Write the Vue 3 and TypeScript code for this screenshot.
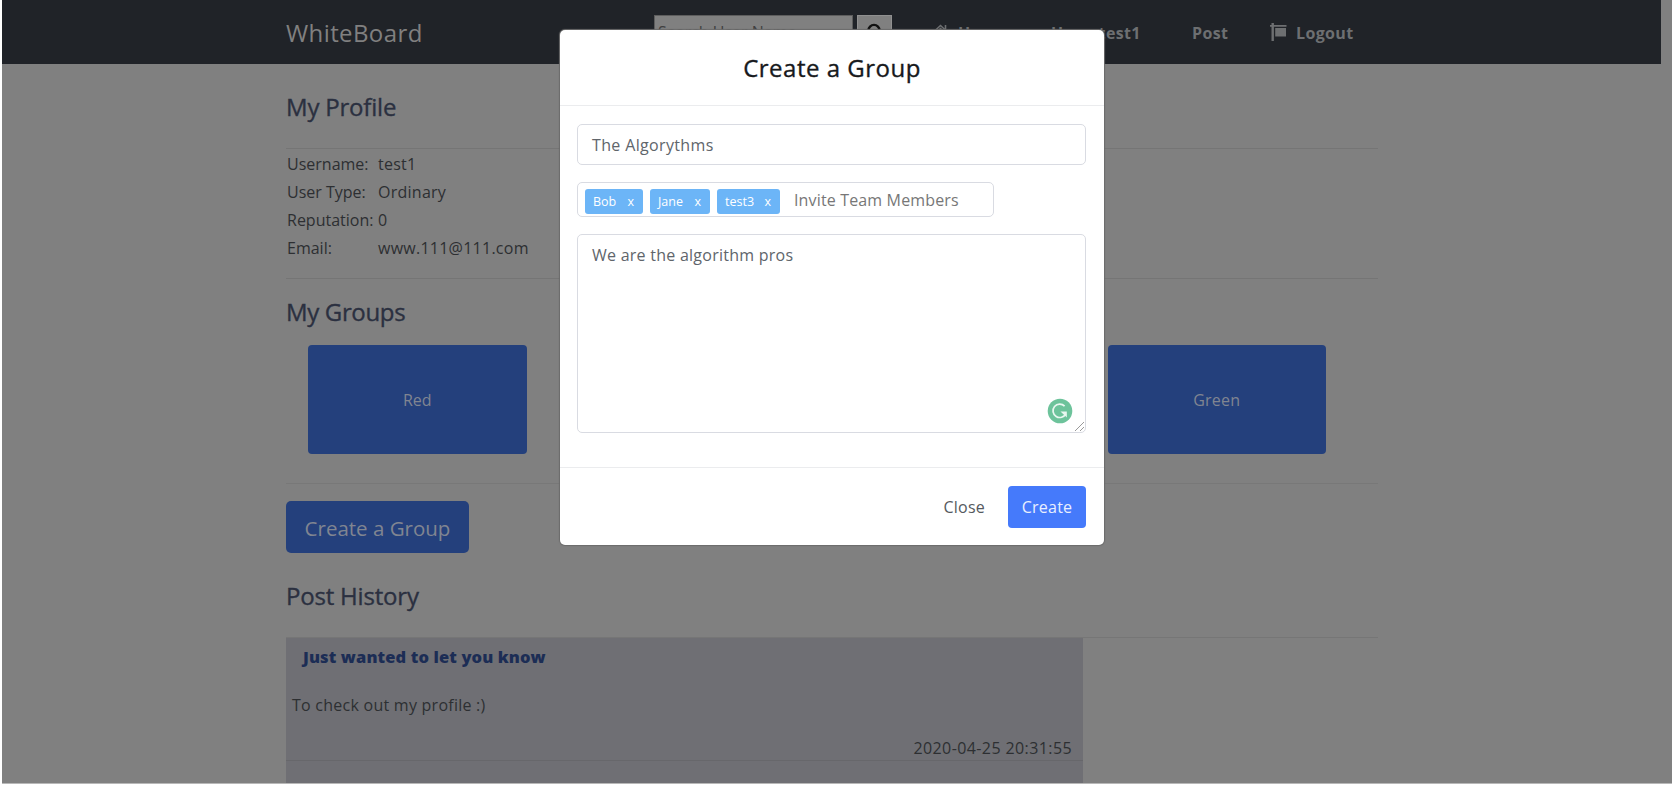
<script setup lang="ts">
interface ProfileRow {
  label: string
  value: string
}

const rows: ProfileRow[] = [
  { label: 'Username:', value: 'test1' },
  { label: 'User Type:', value: 'Ordinary' },
  { label: 'Reputation:', value: '0' },
  { label: 'Email:', value: 'www.111@111.com' },
]
const groups: string[] = ['Red', 'Yellow', 'Blue', 'Green']
const members: string[] = ['Bob', 'Jane', 'test3']
</script>

<template>
  <div class="page">
    <header class="navbar">
      <div class="nav-inner">
        <a class="brand">WhiteBoard</a>
        <div class="search"><span class="search-text">Search User Name</span></div>
        <button class="search-btn">
          <svg width="18" height="18" viewBox="0 0 18 18"><circle cx="8" cy="7.5" r="5.6" /><path d="M12 11.5l5 5" /></svg>
        </button>
        <a class="nav-link home">
          <svg width="17" height="16" viewBox="0 0 17 16"><path d="M1 8.5L8.5 1.5L16 8.5M13.5 1v4" fill="none" stroke="currentColor" stroke-width="1.6" /><path d="M3 8.5l5.500-5 5.500 5V15h-4v-4H7v4H3z" fill="currentColor" /></svg>
          <span>Home</span>
        </a>
        <a class="nav-link user">User: test1</a>
        <a class="nav-link post-link">Post</a>
        <a class="nav-link logout">
          <svg width="17" height="18" viewBox="0 0 17 18" fill="currentColor"><path d="M1.500 0h2.400v18H1.500zM0 2h16.500v1.800H0zM5.200 5H16v8.500H5.200z" /></svg>
          <span>Logout</span>
        </a>
      </div>
    </header>

    <main class="container">
      <h2 class="profile-title">My Profile</h2>
      <dl class="profile">
        <div v-for="row in rows" :key="row.label" class="profile-row">
          <dt>{{ row.label }}</dt>
          <dd>{{ row.value }}</dd>
        </div>
      </dl>
      <h2 class="groups-title">My Groups</h2>
      <div class="groups">
        <div v-for="g in groups" :key="g" class="group">{{ g }}</div>
      </div>
      <div class="create-row"><button class="create-group">Create a Group</button></div>
      <h2 class="history-title">Post History</h2>
      <section class="history">
        <article class="post">
          <h3>Just wanted to let you know</h3>
          <p>To check out my profile :)</p>
          <time>2020-04-25 20:31:55</time>
        </article>
        <article class="post next"></article>
      </section>
    </main>

    <div class="modal">
      <div class="modal-head"><span>Create a Group</span></div>
      <div class="modal-body">
        <div class="field name"><span>The Algorythms</span></div>
        <div class="field invite">
          <span v-for="m in members" :key="m" class="tag"><span>{{ m }}</span><span>x</span></span>
          <span class="placeholder">Invite Team Members</span>
        </div>
        <div class="field about">
          <span>We are the algorithm pros</span>
          <svg class="badge" width="26" height="26" viewBox="0 0 26 26">
            <circle cx="13" cy="13" r="12.300" fill="#6dc39b" />
            <path d="M17.600 8.200A6.700 6.700 0 1 0 18.800 15.600" fill="none" stroke="#e9f7f0" stroke-width="1.700" />
            <path d="M13.500 13.600h6.300v5.800z" fill="#e9f7f0" />
          </svg>
          <svg class="grip" width="11" height="11" viewBox="0 0 11 11"><path d="M1 10L10 1M6 10l4-4" /></svg>
        </div>
      </div>
      <div class="modal-foot">
        <button class="close">Close</button>
        <button class="create">Create</button>
      </div>
    </div>
  </div>
</template>

<style>
body {
  margin: 0;
  background: #fff;
}
</style>

<style scoped>
* {
  box-sizing: border-box;
}
.page {
  position: relative;
  width: 1670px;
  height: 784px;
  margin-left: 2px;
  overflow: hidden;
  border-bottom: 1px solid #b8b8b8;
  background: #808080;
  color: #2d2f32;
  font: 16px/28px "Open Sans", "Noto Sans", sans-serif;
  letter-spacing: 0.25px;
}
button {
  padding: 0;
  border: 0;
  font: inherit;
  letter-spacing: inherit;
}
h2,
h3,
p,
dl,
dd {
  margin: 0;
}
.navbar {
  width: 1659px;
  height: 64px;
  background: #202328;
}
.nav-inner {
  display: flex;
  align-items: center;
  height: 64px;
  padding-left: 284px;
  color: #6d6f71;
}
.brand {
  width: 368px;
  padding-top: 2px;
  font-size: 24px;
  letter-spacing: 0.4px;
  color: #808080;
}
.search {
  width: 199px;
  height: 34px;
  padding-left: 3px;
  border: 1px solid #5d5d5d;
  background: #808080;
  color: #404040;
  line-height: 32px;
  letter-spacing: 0;
}
.search-btn {
  display: flex;
  align-items: center;
  justify-content: center;
  width: 35px;
  height: 34px;
  margin-left: 4px;
  border: 1px solid #909090;
  background: #808080;
}
.search-btn svg {
  fill: none;
  stroke: #111;
  stroke-width: 2.4;
}
.nav-link {
  display: flex;
  align-items: center;
  gap: 9px;
  padding-top: 2px;
  font-weight: 700;
  white-space: nowrap;
  letter-spacing: 0.35px;
}
.nav-link svg {
  margin-top: -2px;
}
.home {
  width: 119px;
  margin-left: 40px;
}
.user {
  width: 141px;
}
.post-link {
  width: 78px;
}
.container {
  width: 1092px;
  margin-left: 284px;
}
h2 {
  height: 32px;
  font-size: 24px;
  font-weight: 500;
  line-height: 32px;
  letter-spacing: -0.2px;
  color: #2b3040;
  -webkit-text-stroke: 0.35px currentColor;
}
.profile-title {
  margin-top: 27px;
}
.profile {
  height: 131px;
  margin-top: 25px;
  padding: 1px 1px 0;
  border-top: 1px solid #757575;
  border-bottom: 1px solid #757575;
}
.profile-row {
  display: flex;
  height: 28px;
}
dt {
  width: 91px;
  letter-spacing: 0;
}
.groups-title {
  margin-top: 17px;
  letter-spacing: -0.35px;
}
.groups {
  display: grid;
  grid-template-columns: repeat(4, 218.5px);
  column-gap: 48px;
  height: 139px;
  padding-left: 22px;
  margin-top: 17px;
  border-bottom: 1px solid #787878;
}
.group {
  height: 109px;
  border-radius: 4px;
  background: #24407c;
  color: #808591;
  text-align: center;
  line-height: 111px;
}
.group:first-child {
  letter-spacing: 0;
}
.create-row {
  height: 52px;
  margin-top: 17px;
}
.create-group {
  width: 183px;
  height: 52px;
  padding-top: 2px;
  border-radius: 5px;
  background: #24407c;
  color: #808591;
  font-size: 20.500px;
  letter-spacing: 0;
}
.history-title {
  margin-top: 27px;
}
.history {
  margin-top: 25px;
  border-top: 1px solid #767676;
}
.post {
  width: 797px;
  height: 123px;
  padding: 5px 6px 0;
  border-bottom: 1px solid #67676b;
  background: #6f6f74;
}
.post h3 {
  margin-left: 11px;
  color: #1c2d55;
  font-size: 16.500px;
  font-weight: 800;
  line-height: 28px;
  letter-spacing: 0.12px;
}
.post p {
  margin-top: 20px;
}
.post time {
  display: block;
  margin: 15px 5px 0 0;
  letter-spacing: 0.4px;
  text-align: right;
}
.modal {
  position: absolute;
  left: 558px;
  top: 30px;
  width: 544px;
  height: 515px;
  border-radius: 5px;
  background: #fff;
  color: #60656b;
  box-shadow: 0 0 1px 1px #6b6b6b;
}
.modal-head {
  height: 76px;
  padding-top: 22px;
  border-bottom: 1px solid #ebecee;
  color: #17191c;
  font-size: 24px;
  font-weight: 500;
  line-height: 32px;
  letter-spacing: 0.5px;
  text-align: center;
  -webkit-text-stroke: 0.35px currentColor;
}
.modal-body {
  height: 361px;
  padding: 18px 18px 0 17px;
}
.field {
  border: 1px solid #d9dbe2;
  border-radius: 5px;
}
.name {
  height: 41px;
  padding-left: 14px;
  line-height: 40px;
  letter-spacing: 0.35px;
}
.invite {
  display: flex;
  align-items: center;
  width: 417px;
  height: 35px;
  margin-top: 17px;
  padding: 3px 0 0 7px;
}
.tag {
  display: flex;
  justify-content: space-between;
  height: 25px;
  margin-right: 7px;
  padding: 0 9px 0 8px;
  border-radius: 3px;
  background: #6cb5f7;
  color: #fff;
  font-size: 12.500px;
  line-height: 25px;
  letter-spacing: 0;
}
.tag:nth-child(1) {
  width: 58px;
}
.tag:nth-child(2) {
  width: 60px;
}
.tag:nth-child(3) {
  width: 63px;
}
.placeholder {
  margin: -3px 0 0 7px;
  color: #777;
  letter-spacing: 0.15px;
}
.about {
  position: relative;
  height: 199px;
  margin-top: 17px;
  padding: 6px 14px;
}
.badge {
  position: absolute;
  right: 12px;
  bottom: 8px;
}
.grip {
  position: absolute;
  right: 0;
  bottom: 0;
  fill: none;
  stroke: #999;
}
.modal-foot {
  display: flex;
  align-items: center;
  justify-content: flex-end;
  height: 78px;
  padding-right: 18px;
  border-top: 1px solid #ebecee;
}
.close {
  margin: 1px 23px 0 0;
  background: none;
  color: #55595e;
}
.create {
  width: 78px;
  height: 42px;
  padding-top: 1px;
  border-radius: 4px;
  background: #457afb;
  color: #e9effe;
}
</style>
